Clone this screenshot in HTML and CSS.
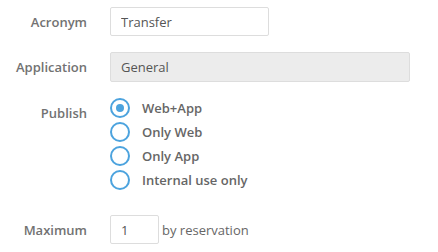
FILE: index.html
```html
<!DOCTYPE html>
<html lang="en">
<head>
    <meta charset="UTF-8" />
    <title>Settings</title>
    <link rel="stylesheet" href="styles.css">
</head>
<body>

<div class="form">

    <!-- Acronym -->
    <div class="form-row">
        <label class="form-label" for="acronym">Acronym</label>
        <input class="text-input acronym" type="text" id="acronym" value="Transfer" />
    </div>

    <!-- Application (lecture seule) -->
    <div class="form-row">
        <label class="form-label" for="application">Application</label>
        <input class="text-input app-input" type="text" id="application" value="General" readonly />
    </div>

    <!-- Publish -->
    <div class="form-row row-top">
        <span class="form-label publish-label">Publish</span>
        <div class="radio-list">
            <label class="radio-item"><span class="radio checked"></span>Web+App</label>
            <label class="radio-item"><span class="radio"></span>Only Web</label>
            <label class="radio-item"><span class="radio"></span>Only App</label>
            <label class="radio-item"><span class="radio"></span>Internal use only</label>
        </div>
    </div>

    <!-- Maximum -->
    <div class="form-row max-row">
        <label class="form-label" for="maximum">Maximum</label>
        <div class="inline-field">
            <input class="text-input max-input" type="text" id="maximum" value="1" />
            <span class="suffix">by reservation</span>
        </div>
    </div>

</div>

</body>
</html>
```

FILE: styles.css
```css
/* ------------------------
   GLOBAL
------------------------- */
body {
    margin: 0;
    background: #fff;
    font-family: "Open Sans", "Liberation Sans", sans-serif;
    font-size: 13px;
    color: #666;
}

.form {
    display: flex;
    flex-direction: column;
    padding-top: 7px;
}

/* Each row: label column + field column */
.form-row {
    display: grid;
    grid-template-columns: 87px auto;
    column-gap: 23px;
    align-items: center;
    margin-bottom: 16px;
}

.row-top {
    align-items: start;
}

.max-row {
    margin-top: 9px;
}

.form-label {
    text-align: right;
    font-weight: 600;
    color: #727272;
    line-height: 20px;
}

.publish-label {
    padding-top: 5px;
}

/* Inputs */
.text-input {
    box-sizing: border-box;
    height: 29px;
    padding: 0 10px;
    border: 1px solid #ddd;
    border-radius: 2px;
    background: #fff;
    font-family: inherit;
    font-size: 13px;
    color: #555;
    outline: none;
}

.acronym {
    width: 159px;
}

.app-input {
    width: 300px;
    height: 30px;
    background: #ececec;
}

.max-input {
    width: 49px;
}

.inline-field {
    display: flex;
    align-items: center;
    gap: 3px;
}

.suffix {
    color: #666;
}

/* Radios */
.radio-list {
    display: flex;
    flex-direction: column;
    gap: 4px;
}

.radio-item {
    display: flex;
    align-items: center;
    height: 20px;
    font-weight: 600;
    color: #666;
}

.radio {
    box-sizing: border-box;
    width: 20px;
    height: 20px;
    margin-right: 12px;
    border: 2.5px solid #4ca3de;
    border-radius: 50%;
    display: flex;
    align-items: center;
    justify-content: center;
}

.radio.checked::after {
    content: "";
    width: 8px;
    height: 8px;
    border-radius: 50%;
    background: #4ca3de;
}
```
